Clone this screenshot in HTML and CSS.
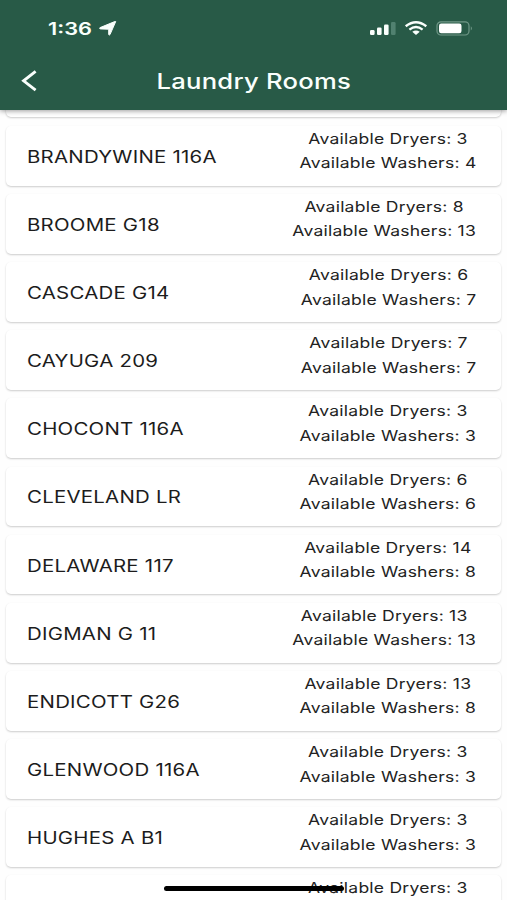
FILE: index.html
```
<!DOCTYPE html>
<html lang="en">
<head>
<meta charset="utf-8">
<title>Laundry Rooms</title>
<link rel="stylesheet" href="styles.css">
</head>
<body>
<div class="app">
  <header class="header">
    <div class="status">
      <span class="time">1:36</span>
      <svg class="locate" width="18" height="15" viewBox="0 0 18 15"><path d="M16.600.8 11 13.600c-.3.6-1.300.5-1.300-.2V8.200L1.400 7.900C.4 7.800.4 6.900 1.100 6.600L15.900.5c.7-.3 1-.1.7.3Z" fill="#fafffc" stroke="#fafffc" stroke-width="1"/></svg>
      <svg class="signals" width="106" height="18" viewBox="0 0 106 18">
        <g fill="#fafffc"><rect x="1" y="11" width="4.600" height="5" rx="1.300"/><rect x="8" y="8.500" width="4.600" height="7.500" rx="1.300"/><rect x="15" y="5.500" width="4.600" height="10.500" rx="1.300"/></g>
        <rect x="22" y="3" width="4.600" height="13" rx="1.300" fill="#518170"/>
        <g fill="none" stroke="#fafffc" stroke-width="2.400"><path d="M36.700 7.300Q47 -.8 57.300 7.300"/><path d="M40.400 10.600Q47 5.600 53.600 10.600"/></g>
        <path d="M43.300 12.800Q47 10.400 50.700 12.800L47.600 15.500Q47 16 46.400 15.500Z" fill="#fafffc"/>
        <rect x="68" y="2.800" width="32" height="13.200" rx="4" fill="none" stroke="#709888" stroke-width="1.200"/>
        <rect x="70" y="4.600" width="22.500" height="9.700" rx="2.200" fill="#fff"/>
        <path d="M101.800 7.200q2.200 2.200 0 4.400Z" fill="#709888"/>
      </svg>
    </div>
    <div class="navbar">
      <svg class="back" width="18" height="24" viewBox="0 0 18 24"><path d="M15.600 2.400 3.600 11.800l12 9.400" fill="none" stroke="#fafffc" stroke-width="2.900"/></svg>
      <h1 class="title"><span>Laundry Rooms</span></h1>
    </div>
  </header>
  <main class="list">
    <section class="card"></section>
    <section class="card"><h2 class="name">BRANDYWINE 116A</h2><div class="counts"><p>Available Dryers: 3</p><p>Available Washers: 4</p></div></section>
    <section class="card"><h2 class="name">BROOME G18</h2><div class="counts"><p>Available Dryers: 8</p><p>Available Washers: 13</p></div></section>
    <section class="card"><h2 class="name">CASCADE G14</h2><div class="counts"><p>Available Dryers: 6</p><p>Available Washers: 7</p></div></section>
    <section class="card"><h2 class="name">CAYUGA 209</h2><div class="counts"><p>Available Dryers: 7</p><p>Available Washers: 7</p></div></section>
    <section class="card"><h2 class="name">CHOCONT 116A</h2><div class="counts"><p>Available Dryers: 3</p><p>Available Washers: 3</p></div></section>
    <section class="card"><h2 class="name">CLEVELAND LR</h2><div class="counts"><p>Available Dryers: 6</p><p>Available Washers: 6</p></div></section>
    <section class="card"><h2 class="name">DELAWARE 117</h2><div class="counts"><p>Available Dryers: 14</p><p>Available Washers: 8</p></div></section>
    <section class="card"><h2 class="name">DIGMAN G 11</h2><div class="counts"><p>Available Dryers: 13</p><p>Available Washers: 13</p></div></section>
    <section class="card"><h2 class="name">ENDICOTT G26</h2><div class="counts"><p>Available Dryers: 13</p><p>Available Washers: 8</p></div></section>
    <section class="card"><h2 class="name">GLENWOOD 116A</h2><div class="counts"><p>Available Dryers: 3</p><p>Available Washers: 3</p></div></section>
    <section class="card"><h2 class="name">HUGHES A B1</h2><div class="counts"><p>Available Dryers: 3</p><p>Available Washers: 3</p></div></section>
    <section class="card"><h2 class="name">HUGHES B</h2><div class="counts"><p>Available Dryers: 3</p><p>Available Washers: 3</p></div></section>
  </main>
  <div class="home-indicator"></div>
</div>
</body>
</html>
```
FILE: styles.css
```
* { box-sizing: border-box; margin: 0; padding: 0; }
body { background: #fefefe; font-family: Inter, "Liberation Sans", sans-serif; }
.app { position: relative; width: 507px; height: 900px; overflow: hidden; }
.header { position: relative; z-index: 1; height: 110px; background: #285a47; color: #fafffc; box-shadow: 0 1px 5px rgba(0,0,0,.4); }
.status { display: flex; align-items: center; height: 56px; padding: 1px 32px 0 48px; }
.time { width: 51px; font-size: 17px; font-weight: 600; white-space: nowrap; transform: scaleX(1.28); transform-origin: left; }
.signals { margin-left: auto; margin-top: -1px; }
.navbar { display: grid; grid-template-columns: 40px 1fr 40px; align-items: center; height: 49px; padding: 0 20px; }
.title { padding-top: 2px; text-align: center; font-size: 21px; font-weight: 500; line-height: 28px; }
.title span { display: inline-block; letter-spacing: .2px; transform: scaleX(1.22); }
.list { margin-top: -52.300px; padding: 0 6px; }
.card { display: flex; align-items: center; justify-content: space-between; height: 59.700px; margin-bottom: 8.460px; padding: 2px 25px 0 21px; border-radius: 5px; background: #fff; box-shadow: 0 1px 2px rgba(0,0,0,.2); }
.name { font-size: 16.600px; letter-spacing: .2px; font-weight: 400; color: #1c1c1c; white-space: nowrap; transform: scaleX(1.23); transform-origin: left; }
.card:last-child .name { padding-top: 2px; }
.counts { align-self: flex-start; margin-top: -1px; text-align: center; font-size: 14.300px; letter-spacing: .2px; line-height: 24.500px; color: #222; white-space: nowrap; transform: scaleX(1.225); transform-origin: right; }
.home-indicator { position: absolute; z-index: 2; left: 164px; top: 886px; width: 180px; height: 5px; border-radius: 3px; background: #000; }
```
